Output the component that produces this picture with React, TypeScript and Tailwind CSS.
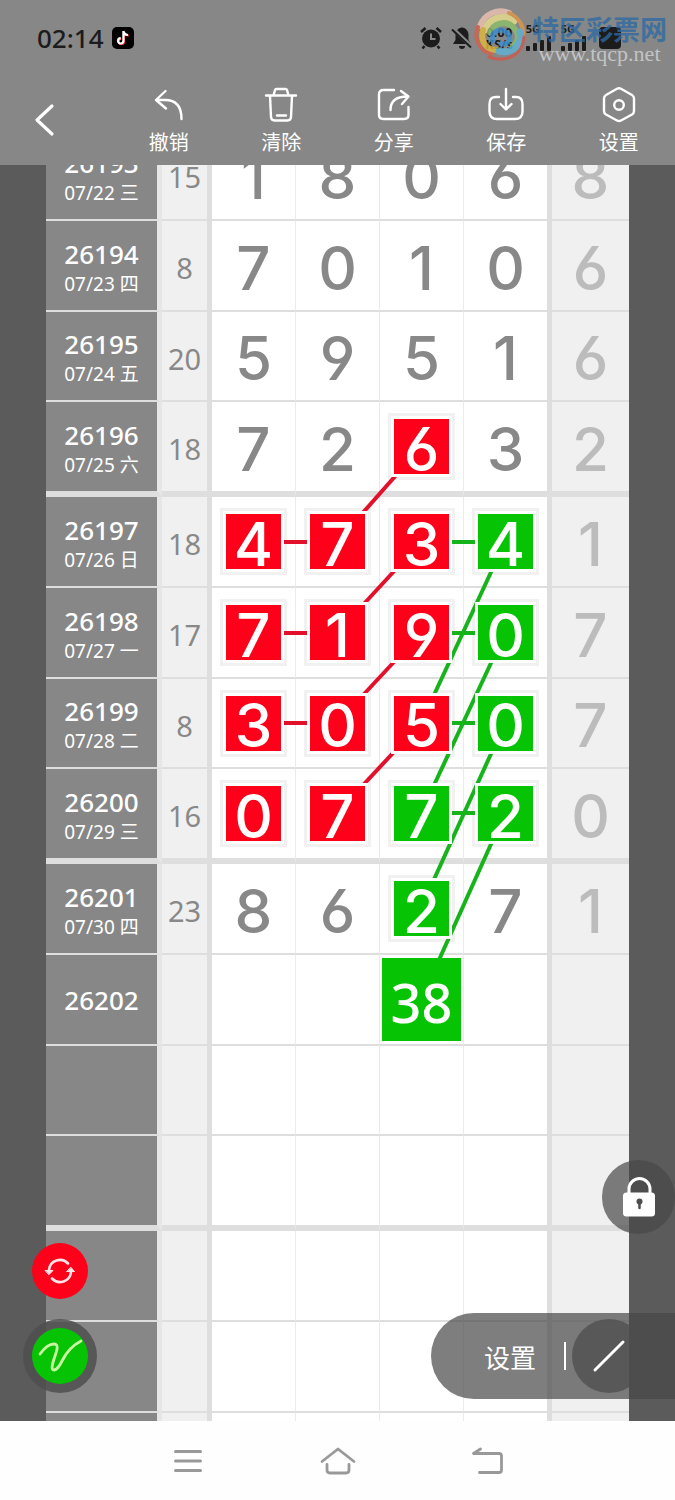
import { useState } from 'react';
import type { ReactNode } from 'react';
import clsx from 'clsx';

type Mark = 'r' | 'g' | 'x';

interface Draw {
  id: string;
  date?: string;
  sum?: string;
  digits?: string;
  last?: string;
  marks?: string; // one letter per digit: r = red, g = green, x = big forecast, . = none
}

const DRAWS: Draw[] = [
  { id: '26193', date: '07/22 三', sum: '15', digits: '1806', last: '8' },
  { id: '26194', date: '07/23 四', sum: '8', digits: '7010', last: '6' },
  { id: '26195', date: '07/24 五', sum: '20', digits: '5951', last: '6' },
  { id: '26196', date: '07/25 六', sum: '18', digits: '7263', last: '2', marks: '..r.' },
  { id: '26197', date: '07/26 日', sum: '18', digits: '4734', last: '1', marks: 'rrrg' },
  { id: '26198', date: '07/27 一', sum: '17', digits: '7190', last: '7', marks: 'rrrg' },
  { id: '26199', date: '07/28 二', sum: '8', digits: '3050', last: '7', marks: 'rrrg' },
  { id: '26200', date: '07/29 三', sum: '16', digits: '0772', last: '0', marks: 'rrgg' },
  { id: '26201', date: '07/30 四', sum: '23', digits: '8627', last: '1', marks: '..g.' },
  { id: '26202', marks: '..x.' },
  { id: '' },
  { id: '' },
  { id: '' },
  { id: '' },
  { id: '' },
];

const FORECAST = '38';

// x centre of each digit column, y centre of each row, in table coordinates
const COL = [207, 291, 375, 459];
const ROW = [45, 136, 226, 317, 412, 503, 593, 683, 778, 870];

const RED_LINES = [
  [2, 3, 1, 4],
  [0, 4, 1, 4],
  [2, 4, 1, 5],
  [0, 5, 1, 5],
  [2, 5, 1, 6],
  [0, 6, 1, 6],
  [2, 6, 1, 7],
];

const GREEN_LINES = [
  [2, 4, 3, 4],
  [2, 5, 3, 5],
  [2, 6, 3, 6],
  [2, 7, 3, 7],
  [3, 4, 2, 6],
  [3, 5, 2, 7],
  [3, 6, 2, 8],
  [3, 7, 2, 9],
];

function Lines({ lines, color }: { lines: number[][]; color: string }) {
  return (
    <g stroke={color} strokeWidth="4">
      {lines.map(([c1, r1, c2, r2]) => (
        <line key={`${c1}${r1}${c2}${r2}`} x1={COL[c1]} y1={ROW[r1]} x2={COL[c2]} y2={ROW[r2]} />
      ))}
    </g>
  );
}

function Digit({ value, mark }: { value?: string; mark?: string }) {
  const m = mark as Mark | undefined;
  if (m === 'x') {
    return (
      <span className="relative z-20 mx-auto flex h-[83px] w-[79px] items-center justify-center bg-[#06c404] pt-1 font-['Noto_Sans',sans-serif] text-[54px] leading-none font-medium text-white">
        {FORECAST}
      </span>
    );
  }
  if (m === 'r' || m === 'g') {
    return (
      <span className="mx-auto block w-[67px] bg-[#f1f1f1] p-[3px]">
        <span
          className={clsx(
            'relative z-20 flex h-[61px] items-center justify-center border-[3px] border-white pt-1 text-[60px] leading-none font-medium text-white',
            m === 'r' ? 'bg-[#fe0019]' : 'bg-[#06c404]',
          )}
        >
          {value}
        </span>
      </span>
    );
  }
  return <span className="block pt-1 text-[60px] leading-none font-medium">{value}</span>;
}

function DrawTable() {
  return (
    <div className="relative -mt-[35px]">
      <table className="w-full table-fixed border-separate border-spacing-0 bg-white text-center text-[#888]">
        <colgroup>
          <col className="w-[116px]" />
          <col className="w-[50px]" />
          <col className="w-[84px]" />
          <col className="w-[84px]" />
          <col className="w-[84px]" />
          <col className="w-[88px]" />
          <col className="w-[77px]" />
        </colgroup>
        <tbody className="font-['Inter',sans-serif] [font-feature-settings:'cv03','cv04']">
          {DRAWS.map((d, i) => {
            const pos = i % 4;
            const line = clsx('border-[#dedede] p-0', pos === 3 ? 'border-b-6' : 'border-b-2');
            return (
              <tr key={i} className={pos === 3 ? 'h-[95px]' : pos === 2 ? 'h-[90px]' : 'h-[91px]'}>
                <th
                  scope="row"
                  className={clsx(
                    line,
                    "border-r-5 border-r-[#e6e6e6] bg-[#878787] font-['Noto_Sans','Noto_Sans_CJK_SC',sans-serif] font-medium text-white",
                  )}
                >
                  <span className={clsx('block text-[26px] leading-7', d.date && 'pt-2')}>{d.id}</span>
                  {d.date && <span className="block text-[19px] leading-8 font-normal">{d.date}</span>}
                </th>
                <td
                  className={clsx(
                    line,
                    "border-r-5 bg-[#f0f0f0] font-['Noto_Sans',sans-serif] text-[29px] leading-none",
                  )}
                >
                  <span className="block pt-1">{d.sum}</span>
                </td>
                {[0, 1, 2, 3].map((c) => (
                  <td key={c} className={clsx(line, c === 3 ? 'border-r-5' : 'border-r border-r-[#ebebeb]')}>
                    <Digit value={d.digits?.[c]} mark={d.marks?.[c]} />
                  </td>
                ))}
                <td className={clsx(line, 'bg-[#f0f0f0] text-[#bcbcbc]')}>
                  <Digit value={d.last} />
                </td>
              </tr>
            );
          })}
        </tbody>
      </table>
      <svg
        className="pointer-events-none absolute top-0 left-0 z-10 h-[1000px] w-full"
        viewBox="0 0 583 1000"
        preserveAspectRatio="none"
        aria-hidden="true"
      >
        <Lines lines={RED_LINES} color="#e3102c" />
        <Lines lines={GREEN_LINES} color="#17b31a" />
      </svg>
    </div>
  );
}

function Tool({ label, children }: { label: string; children: ReactNode }) {
  return (
    <button type="button" className="flex flex-col items-center gap-[6px] text-[20px] leading-7">
      <svg
        width="36"
        height="36"
        viewBox="0 0 36 36"
        fill="none"
        stroke="currentColor"
        strokeWidth="2.4"
        strokeLinecap="round"
        strokeLinejoin="round"
        aria-hidden="true"
      >
        {children}
      </svg>
      {label}
    </button>
  );
}

function Signal() {
  return (
    <span className="flex flex-col items-end">
      <span className="mr-3 text-[11px] leading-3 font-bold">5G</span>
      <svg width="27" height="17" viewBox="0 0 27 17" fill="currentColor" aria-hidden="true">
        <rect x="1" y="11" width="4" height="5" rx="1" />
        <rect x="8" y="8" width="4" height="8" rx="1" />
        <rect x="15" y="5" width="4" height="11" rx="1" />
        <rect x="22" y="1" width="4" height="15" rx="1" />
      </svg>
    </span>
  );
}

function StatusBar() {
  return (
    <div className="relative flex h-[75px] items-center pr-[54px] pl-[37px] text-[#1c1c1c]">
      <span className="text-[26px] leading-none font-medium">02:14</span>
      <svg className="ml-2" width="22" height="22" viewBox="0 0 22 22" aria-hidden="true">
        <rect width="22" height="22" rx="5" fill="#000" />
        <path
          d="M11.4 4v9.8a2.7 2.7 0 1 1-2.7-2.7M11.4 4c.3 2.4 2 3.9 4.6 4"
          fill="none"
          stroke="#f33"
          strokeWidth="2"
          transform="translate(.7 .6)"
        />
        <path d="M11.4 4v9.8a2.7 2.7 0 1 1-2.7-2.7M11.4 4c.3 2.4 2 3.9 4.6 4" fill="none" stroke="#fff" strokeWidth="2.2" />
      </svg>
      <div className="ml-auto flex items-center gap-2">
        <svg width="24" height="24" viewBox="0 0 24 24" aria-hidden="true">
          <circle cx="12" cy="12.5" r="9" fill="currentColor" />
          <path
            d="M2 6l4.500-4M22 6l-4.500-4M5.500 20L3.500 22.500M18.500 20l2 2.500"
            stroke="currentColor"
            strokeWidth="2.5"
          />
          <path d="M12 7.500v5.500h4.500" fill="none" stroke="#878787" strokeWidth="2" />
        </svg>
        <svg width="22" height="24" viewBox="0 0 22 24" aria-hidden="true">
          <path
            d="M11 1.500c-4 .6-6.500 3.500-6.500 7.500v5L2 18h18l-2.500-4V9c0-4-2.500-6.900-6.500-7.500zM8 20h6a3 3 0 0 1-6 0z"
            fill="currentColor"
          />
          <path d="M2 3l19 18" stroke="#878787" strokeWidth="4" />
          <path d="M1 3.500l19 18" stroke="currentColor" strokeWidth="2" />
        </svg>
        <span className="mr-1 ml-1 text-center text-[13px] leading-3 font-bold">
          0.00
          <br />
          KS/s
        </span>
        <Signal />
        <Signal />
        <svg className="ml-1" width="22" height="24" viewBox="0 0 22 24" aria-hidden="true">
          <rect y="1" width="22" height="22" rx="4" fill="currentColor" />
        </svg>
      </div>

      {/* Site watermark */}
      <div className="absolute top-2 right-2 flex items-start gap-1">
        <svg width="54" height="56" viewBox="0 0 54 56" fill="none" strokeLinecap="round" opacity=".8" aria-hidden="true">
          <path d="M6 18C10 6 24 0 35 5" stroke="#f0c4b4" strokeWidth="6" />
          <path d="M11 22C15 10 28 6 40 13" stroke="#ece08c" strokeWidth="7" />
          <path d="M35 5c10 4 15 13 14 23" stroke="#e0984a" strokeWidth="4" />
          <path d="M16 25c3-10 16-13 23-6s6 14 0 19" stroke="#8cc06a" strokeWidth="6" />
          <path d="M4 19c-5 12 2 24 13 27" stroke="#d8604a" strokeWidth="4" />
          <path d="M9 22c-3 11 3 20 14 20" stroke="#e2b93c" strokeWidth="6" />
          <path d="M46 24c3 14-9 22-21 19" stroke="#5fb4d6" strokeWidth="7" />
          <path d="M50 29c-1 19-19 26-35 20" stroke="#d2574a" strokeWidth="3" />
          <path d="M19 33c-3-8 6-14 13-9s2 13-5 12" stroke="#3c8fd0" strokeWidth="5" />
        </svg>
        <div className="flex flex-col items-center pt-2">
          <span className="text-[27px] leading-7 font-bold text-[#2f6aa3]/80">特区彩票网</span>
          <span className="font-['Liberation_Serif',serif] text-[22px] leading-5 text-[#c4c4c4]">www.tqcp.net</span>
        </div>
      </div>
    </div>
  );
}

export default function App() {
  const [locked, setLocked] = useState(true);

  return (
    <div className="flex h-screen flex-col overflow-hidden bg-[#5b5b5b] font-['Noto_Sans','Noto_Sans_CJK_SC',sans-serif]">
      <header className="relative z-30 shrink-0 bg-[#878787] text-white">
        <StatusBar />
        <div className="grid h-[90px] grid-cols-6 items-start pt-3">
          <button type="button" aria-label="返回" className="mt-3 ml-8 w-6">
            <svg
              width="24"
              height="42"
              viewBox="0 0 24 42"
              fill="none"
              stroke="currentColor"
              strokeWidth="3.2"
              strokeLinecap="round"
              strokeLinejoin="round"
            >
              <path d="M20 7L5 21l15 14" />
            </svg>
          </button>
          <Tool label="撤销">
            <path d="M14.500 4L5 13l10 8.500M5 13h9c11 0 16.500 6 16.500 19" />
          </Tool>
          <Tool label="清除">
            <path d="M3 8.500h30M10.500 8.500l1.500-5.500q.3-1 1.500-1h9q1.200 0 1.500 1l1.500 5.500M7 9l1 21q.2 3.500 3.500 3.500h13q3.300 0 3.500-3.500l1-21M14 28.500h9" />
          </Tool>
          <Tool label="分享">
            <path d="M18 3H7.500Q3 3 3 7.500v20.500Q3 32 7.500 32h20.500Q32.500 32 32.500 28v-8M14.500 23c0-9 5-13.500 17-13.500M25 4l7.500 5.500L26 17" />
          </Tool>
          <Tool label="保存">
            <path d="M11 10H8Q1.500 10 1.500 17v7.500Q1.500 32 9 32h18q7.500 0 7.500-7.500V17q0-7-6.500-7h-3M18 2v20M12.500 17l5.500 5.500 5.500-5.500" />
          </Tool>
          <Tool label="设置">
            <path d="M16 1.800q2-1.100 4 0L31 8q2 1.200 2 3.500v12.500q0 2.300-2 3.500l-11 6q-2 1.100-4 0l-11-6q-2-1.200-2-3.500V11.500Q3 9.200 5 8z" />
            <circle cx="18" cy="18" r="4.8" />
          </Tool>
        </div>
      </header>

      <main className="relative min-h-0 flex-1">
        <div className="h-full overflow-hidden px-[46px]">
          <DrawTable />
        </div>

        {/* Floating controls */}
        <div className="absolute bottom-7 left-[23px] z-30 flex flex-col items-center gap-5 text-white">
          <button
            type="button"
            aria-label="切换颜色"
            className="flex size-14 items-center justify-center rounded-full bg-[#fe0019]"
          >
            <svg width="32" height="32" viewBox="0 0 32 32" fill="none" stroke="#fde4e6" strokeWidth="2.6" strokeLinecap="round">
              <path d="M5 15a11 11 0 0 1 19-6.500M27 17A11 11 0 0 1 8 23.500" />
              <path d="M1.500 15.500h7.500L5 19.500zM23 16.500h7.500L27 12.500z" fill="#fde4e6" strokeWidth="1" strokeLinejoin="round" />
            </svg>
          </button>
          <button
            type="button"
            aria-label="画笔"
            className="flex size-[74px] items-center justify-center rounded-full bg-[#4f4f4f]/85"
          >
            <span className="flex size-14 items-center justify-center rounded-full bg-[#06c404]">
              <svg width="46" height="36" viewBox="0 0 46 36" fill="none" stroke="#c9f7a0" strokeWidth="2.8" strokeLinecap="round">
                <path d="M3 16C8 9 13 6 17 6c6 0 2 9 0 15s-3 11 0 11 5-3 8-9c4-8 11-16 19-20" />
              </svg>
            </span>
          </button>
        </div>

        <button
          type="button"
          aria-label="锁定"
          aria-pressed={locked}
          onClick={() => setLocked(!locked)}
          className="absolute right-0 bottom-[187px] z-30 flex h-[74px] w-[73px] items-center justify-center rounded-full bg-[#474747]/70 text-white"
        >
          <svg width="34" height="40" viewBox="0 0 34 40" aria-hidden="true">
            <path d="M7 18v-6a10.500 10.500 0 0 1 21 0v6" fill="none" stroke="currentColor" strokeWidth="3" />
            <rect x="1" y="15.5" width="32" height="24" rx="3.5" fill="currentColor" />
            <circle cx="17.5" cy="24.5" r="3" fill="#4d4d4d" />
            <path d="M17.500 25v6" stroke="#4d4d4d" strokeWidth="2.5" strokeLinecap="round" />
          </svg>
        </button>

        <div className="absolute right-0 bottom-[22px] z-30 flex h-[86px] w-[244px] items-center rounded-l-full bg-[#474747]/70 text-white">
          <button type="button" className="ml-[53px] pt-1 text-[26px] leading-none">
            设置
          </button>
          <span className="ml-7 h-7 w-[2px] bg-white" />
          <button
            type="button"
            aria-label="直线"
            className="ml-[6px] flex size-[74px] items-center justify-center rounded-full bg-[#4d4d4d]/75"
          >
            <svg width="34" height="34" viewBox="0 0 34 34" stroke="currentColor" strokeWidth="3" strokeLinecap="round">
              <path d="M3 31L31 3" />
            </svg>
          </button>
        </div>
      </main>

      <nav className="z-30 flex h-[79px] shrink-0 items-center justify-center gap-[114px] bg-[#fefefe] text-[#999]">
        <button type="button" aria-label="最近任务">
          <svg width="36" height="36" viewBox="0 0 36 36" stroke="currentColor" strokeWidth="3" strokeLinecap="round">
            <path d="M5.500 8.500h25M5.500 18h25M5.500 27.500h25" />
          </svg>
        </button>
        <button type="button" aria-label="主页">
          <svg
            width="36"
            height="36"
            viewBox="0 0 36 36"
            fill="none"
            stroke="currentColor"
            strokeWidth="2.8"
            strokeLinecap="round"
            strokeLinejoin="round"
          >
            <path d="M2 18.500L18 6l16 12.500M7 21.500V27q0 3 3 3h16q3 0 3-3v-5.500" />
          </svg>
        </button>
        <button type="button" aria-label="返回上一页">
          <svg
            width="36"
            height="36"
            viewBox="0 0 36 36"
            fill="none"
            stroke="currentColor"
            strokeWidth="2.8"
            strokeLinecap="round"
            strokeLinejoin="round"
          >
            <path d="M10.500 6L3.500 10.500H29q2.500 0 2.500 2.500v14q0 2.500-2.500 2.500H9.500" />
          </svg>
        </button>
      </nav>
    </div>
  );
}
